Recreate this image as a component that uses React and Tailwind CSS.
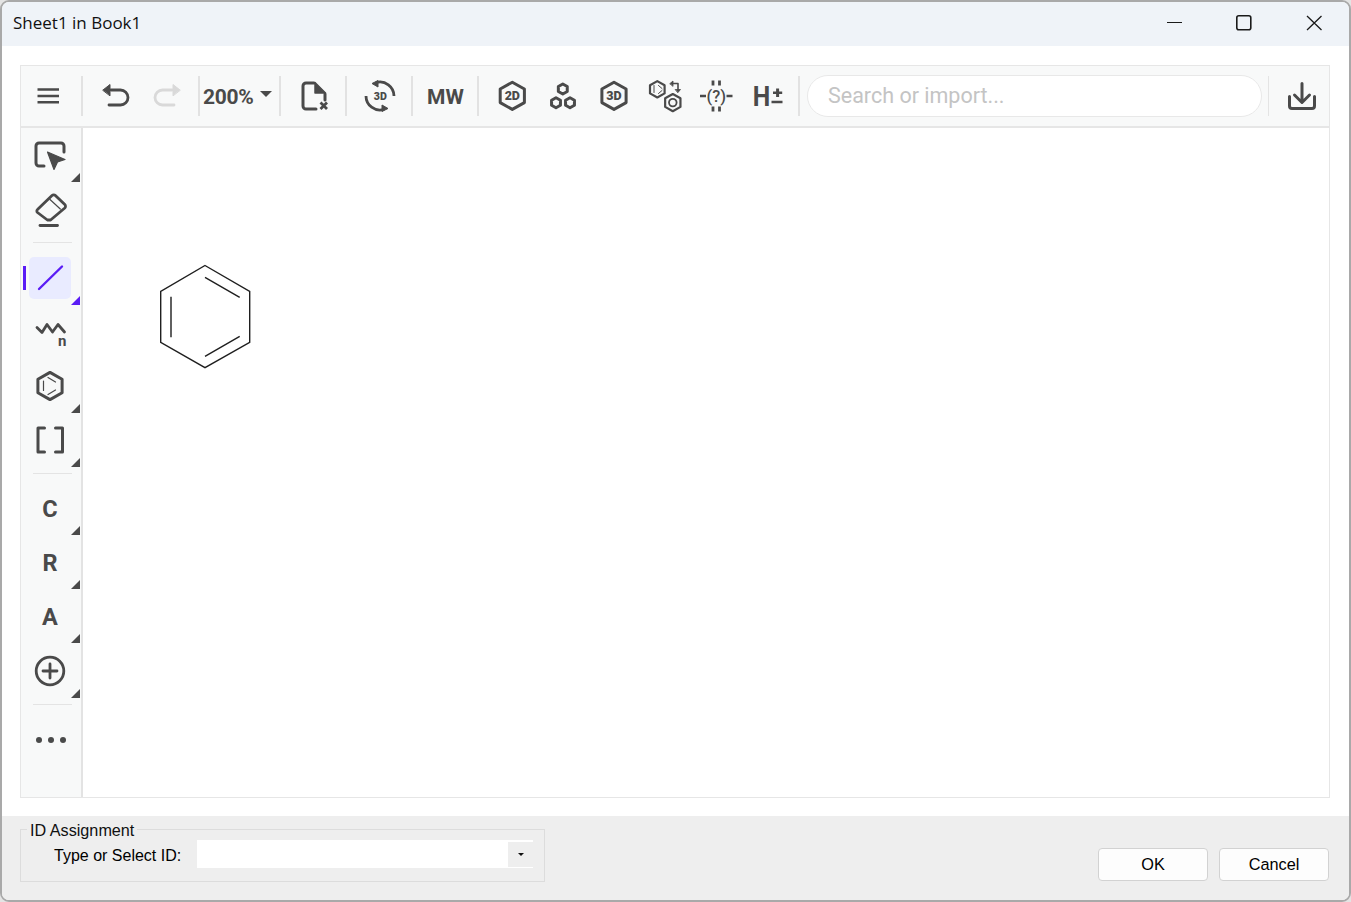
import React from "react";

const INK = "#4a4a4a";

function hex(cx, cy, r) {
  const a = r * 0.89;
  const b = r * 0.5;
  return `M${cx} ${cy - r}L${cx + a} ${cy - b}V${cy + b}L${cx} ${cy + r}L${cx - a} ${cy + b}V${cy - b}Z`;
}

// svg whose viewBox is expressed in page coordinates, sized to its slot
function Ic({ x, y, w, h, children }) {
  return (
    <svg
      width={w}
      height={h}
      viewBox={`${x} ${y} ${w} ${h}`}
      fill="none"
      stroke={INK}
      strokeLinecap="round"
      strokeLinejoin="round"
      className="block shrink-0"
    >
      {children}
    </svg>
  );
}

const T = (x, w, children) => (
  <Ic x={x} y={66} w={w} h={60}>
    {children}
  </Ic>
);

function Div() {
  return <div className="h-[40px] w-[2px] shrink-0 bg-[#e2e2e2]" />;
}

function Toolbar() {
  return (
    <div className="flex h-[60px] shrink-0 items-center border-b-0 bg-[#f8f9f9]">
      {T(21, 60, <g strokeWidth="2.6" strokeLinecap="butt"><path d="M37.5 89.5H59M37.5 96H59M37.5 102.3H59" /></g>)}
      <Div />
      {T(83, 58, <g strokeWidth="2.8"><path d="M111 90H120.5a7.5 7.5 0 0 1 0 15H109" /><path d="M103 90L110 84.5V95.5Z" fill={INK} strokeWidth="1" /></g>)}
      {T(141, 57, <g strokeWidth="2.8" stroke="#d9d9d9"><path d="M172 90H162.5a7.5 7.5 0 0 0 0 15H174" /><path d="M180 90L173 84.5V95.5Z" fill="#d9d9d9" strokeWidth="1" /></g>)}
      <Div />
      <div className="flex h-[60px] w-[79px] shrink-0 items-center pl-[3px]">
        <span className="mt-[3px] w-[57px] [font-family:Roboto,sans-serif] text-[21px] leading-none font-bold tracking-[-0.3px] text-[#4a4a4a]">200%</span>
        <svg width="12" height="6" viewBox="0 0 12 6" className="mb-[5px] block"><path d="M0 0H12L6 6Z" fill={INK} /></svg>
      </div>
      <Div />
      {T(281, 64, <g strokeWidth="3"><path d="M314 83H306a3 3 0 0 0-3 3V106a3 3 0 0 0 3 3H316M325 94V100" /><path d="M315 82.5L325.5 93H315Z" fill={INK} strokeWidth="1.5" /><path d="M320.5 102.5L327 109M327 102.5L320.5 109" strokeWidth="2.8" strokeLinecap="butt" /></g>)}
      <Div />
      {T(347, 64, (
        <g strokeWidth="2.8" strokeLinecap="butt">
          <path d="M376 82.6A14 14 0 0 1 394 96" />
          <path d="M372 83.5L378 80.5V87Z" fill={INK} strokeWidth="1" />
          <path d="M384 109.4A14 14 0 0 1 366 96" />
          <path d="M388 108.5L382 111.5V105Z" fill={INK} strokeWidth="1" />
          <text x="380.3" y="100" textAnchor="middle" fontFamily="Roboto" fontWeight="900" fontSize="11.5" textLength="13" lengthAdjust="spacingAndGlyphs" fill={INK} stroke="none">3D</text>
        </g>
      ))}
      <Div />
      <div className="flex h-[60px] w-[64px] shrink-0 items-center justify-center pt-[3px] pl-px [font-family:Roboto,sans-serif] text-[21px] leading-none font-bold text-[#4a4a4a]">MW</div>
      <Div />
      <div className="w-[8px] shrink-0" />
      {T(487, 51, (
        <g strokeWidth="3">
          <path d={hex(512.3, 95.8, 13.6)} />
          <text x="512.3" y="100.4" textAnchor="middle" fontFamily="Roboto" fontWeight="900" fontSize="12.5" fill={INK} stroke="none">2D</text>
        </g>
      ))}
      {T(538, 51, <g strokeWidth="3"><path d={hex(562.8, 89, 5)} /><path d={hex(556, 102.7, 5)} /><path d={hex(570, 102.7, 5)} /></g>)}
      {T(589, 51, (
        <g strokeWidth="3">
          <path d={hex(614, 95.8, 13.6)} />
          <text x="614" y="100.4" textAnchor="middle" fontFamily="Roboto" fontWeight="900" fontSize="12.5" fill={INK} stroke="none">3D</text>
        </g>
      ))}
      {T(640, 51, (
        <g strokeWidth="2.2">
          <path d={hex(657.3, 89.3, 8.2)} />
          <path d="M654 85.5V92.5M658.5 85.5L662 88.5M658.5 93.5L662 90.5" strokeWidth="1" />
          <path d={hex(672.8, 102.6, 8.6)} />
          <circle cx="672.8" cy="102.6" r="3.8" strokeWidth="1.8" />
          <path d="M672 83.5H678V90" strokeWidth="1.6" />
          <path d="M670 83.5L673 81V86Z" fill={INK} strokeWidth="0.8" />
          <path d="M675.5 89.5H680.5L678 92.5Z" fill={INK} strokeWidth="0.8" />
        </g>
      ))}
      {T(691, 51, (
        <g strokeWidth="2.4" strokeLinecap="butt">
          <path d="M700 96H706M726.5 96H732.5" />
          <path d="M713 80.5V85.5M719.5 80.5V85.5M713 106.5V111.5M719.5 106.5V111.5" strokeWidth="2.8" />
          <text x="716.2" y="101.6" textAnchor="middle" fontFamily="Roboto" fontWeight="500" fontSize="16.5" fill={INK} stroke="none">(?)</text>
        </g>
      ))}
      {T(742, 51, (
        <g strokeWidth="2.4" strokeLinecap="butt">
          <text x="761.5" y="105.8" textAnchor="middle" fontFamily="Roboto" fontWeight="700" fontSize="28" textLength="17.5" lengthAdjust="spacingAndGlyphs" fill={INK} stroke="none">H</text>
          <path d="M777.6 88.5V97" strokeWidth="3" />
          <path d="M773 92.8H782.2" strokeWidth="2.6" />
          <path d="M771.5 102H782.5" />
        </g>
      ))}
      <div className="w-[5px] shrink-0" />
      <Div />
      <div className="ml-[7px] flex h-[42px] w-[455px] shrink-0 items-center rounded-full border border-[#e8e8e8] bg-white pl-[20px] [font-family:Roboto,sans-serif] text-[21.5px] leading-none text-[#c4c4c4]">
        Search or import...
      </div>
      <div className="ml-[6px] h-[40px] w-px shrink-0 bg-[#e4e4e4]" />
      {T(1269, 60, <g strokeWidth="3"><path d="M1302 83.5V102M1294.5 95L1302 102.5L1309.5 95" /><path d="M1289.5 96.5V106a2.5 2.5 0 0 0 2.5 2.5H1312a2.5 2.5 0 0 0 2.5-2.5V96.5" /></g>)}
    </div>
  );
}

function Tri({ color = "#4a4a4a" }) {
  return (
    <svg width="9" height="9" viewBox="0 0 9 9" className="absolute right-px bottom-0 block">
      <path d="M9 0V9H0Z" fill={color} />
    </svg>
  );
}

function SideBtn({ y, tri, triColor, children }) {
  return (
    <div className="relative h-[54px] w-[60px] shrink-0">
      <Ic x={21} y={y} w={60} h={54}>
        {children}
      </Ic>
      {tri && <Tri color={triColor} />}
    </div>
  );
}

function SideText({ tri = true, children }) {
  return (
    <div className="relative flex h-[54px] w-[60px] shrink-0 items-center justify-center pt-[3px] pr-[2px] [font-family:Roboto,sans-serif] text-[23.5px] leading-none font-bold text-[#4a4a4a]">
      {children}
      {tri && <Tri />}
    </div>
  );
}

function SideDiv({ mt, mb }) {
  return <div className={`ml-[12px] h-px w-[39px] shrink-0 bg-[#e4e4e4] ${mt} ${mb}`} />;
}

function Sidebar() {
  return (
    <div className="flex w-[62px] shrink-0 flex-col border-r-2 border-[#e3e3e3] bg-[#f8f9f9]">
      <SideBtn y={128} tri>
        <g strokeWidth="3">
          <path d="M44 166H39a3 3 0 0 1-3-3V146a3 3 0 0 1 3-3H61a3 3 0 0 1 3 3V152" />
          <path d="M47.5 152L65 159.5L57.5 162L54 169.5Z" fill={INK} strokeWidth="1.2" />
        </g>
      </SideBtn>
      <div className="h-px shrink-0" />
      <SideBtn y={183}>
        <g strokeWidth="2.8">
          <path d="M37.5 209.5L52 195.5a2.4 2.4 0 0 1 3.4 0L64.8 204.6a2.4 2.4 0 0 1 0 3.4L50.6 220H47.4L37.5 212.5a2 2 0 0 1 0-3Z" />
          <path d="M50 199.5L60.3 209" strokeWidth="1.2" />
          <path d="M40 225.5H57.5" />
        </g>
      </SideBtn>
      <SideDiv mt="mt-[5px]" mb="mb-[8px]" />
      <div className="relative h-[54px] w-[60px] shrink-0">
        <div className="absolute top-[15px] left-[2px] h-[24px] w-[2.5px] bg-[#5a1cf5]" />
        <div className="absolute top-[6px] left-[8px] flex h-[42px] w-[42px] items-center justify-center rounded-[5px] bg-[#e9ebff]">
          <svg width="42" height="42" viewBox="0 0 42 42" fill="none" className="block">
            <path d="M10 32L33 9.5" stroke="#5a1cf5" strokeWidth="2.4" strokeLinecap="round" />
          </svg>
        </div>
        <Tri color="#5a1cf5" />
      </div>
      <SideBtn y={305}>
        <g strokeWidth="2.8">
          <path d="M37 327.5L42 332.5L47 324.5L52.5 332L58 324.5L64.5 332" />
          <text x="62.2" y="345.6" textAnchor="middle" fontFamily="Roboto" fontWeight="700" fontSize="15" fill={INK} stroke="none">n</text>
        </g>
      </SideBtn>
      <SideBtn y={359} tri>
        <g strokeWidth="3">
          <path d={hex(50, 386, 13.6)} />
          <path d="M43.5 381V390.5M48 377.5L55.5 382M48 394.5L55.5 390" strokeWidth="1.2" />
        </g>
      </SideBtn>
      <SideBtn y={413} tri>
        <g strokeWidth="3">
          <path d="M44.5 428H38V452H44.5M55.5 428H62.5V452H55.5" />
        </g>
      </SideBtn>
      <SideDiv mt="mt-[6px]" mb="mb-[7px]" />
      <SideText>C</SideText>
      <SideText>R</SideText>
      <SideText>A</SideText>
      <div className="h-px shrink-0" />
      <SideBtn y={644} tri>
        <g strokeWidth="2.8">
          <circle cx="50" cy="671" r="13.8" />
          <path d="M50 664V678M43 671H57" />
        </g>
      </SideBtn>
      <SideDiv mt="mt-[6px]" mb="mb-[8px]" />
      <SideBtn y={713}>
        <g fill={INK} stroke="none">
          <circle cx="39" cy="740" r="3" />
          <circle cx="51" cy="740" r="3" />
          <circle cx="63" cy="740" r="3" />
        </g>
      </SideBtn>
    </div>
  );
}

function Canvas() {
  return (
    <div className="min-w-0 flex-1 bg-white pt-[136px] pl-[75px]">
      <svg width="94" height="106" viewBox="158 264 94 106" fill="none" stroke="#1f1f1f" strokeWidth="1.4" className="block">
        <path d="M205 265.5L249.7 291.3V342.3L205 367.7L160.7 342.3V291.3Z" />
        <path d="M171 296.7V337.3M205 277.3L239.7 297.3M205 356.3L239.7 336.3" />
      </svg>
    </div>
  );
}

function TitleBar() {
  return (
    <div className="flex h-[44px] shrink-0 items-center bg-[#eff3f8] pl-[11px]">
      <span className="mb-[3px] [font-family:'Open_Sans',sans-serif] text-[17px] leading-none text-[#111111]">Sheet1 in Book1</span>
      <div className="ml-auto flex">
        <Ic x={1139} y={2} w={70} h={44}>
          <path d="M1167 22.5H1182" stroke="#1a1a1a" strokeWidth="1.2" strokeLinecap="butt" />
        </Ic>
        <Ic x={1209} y={2} w={70} h={44}>
          <rect x="1236.8" y="15.8" width="14" height="14" rx="2" stroke="#1a1a1a" strokeWidth="1.6" />
        </Ic>
        <Ic x={1279} y={2} w={70} h={44}>
          <path d="M1307 16L1321.5 30M1321.5 16L1307 30" stroke="#1a1a1a" strokeWidth="1.3" strokeLinecap="butt" />
        </Ic>
      </div>
    </div>
  );
}

function Footer() {
  return (
    <div className="flex h-[84px] shrink-0 justify-between bg-[#eeeeee] pt-[3px] pr-[20px] pl-[18px] [font-family:'Liberation_Sans',Arial,sans-serif] text-[16px] text-black">
      <fieldset className="h-[63px] w-[525px] border border-[#dcdcdc]">
        <legend className="ml-[6px] px-[3px] pt-[2px] text-[16.2px] leading-[18px] text-[#111111]">ID Assignment</legend>
        <div className="mt-px flex h-[28px] items-center pl-[33px]">
          <span className="mt-[3px] w-[143px] shrink-0 leading-none">Type or Select ID:</span>
          <div className="flex h-[28px] w-[336px] items-center justify-end bg-white">
            <div className="flex h-[25px] w-[25px] items-center justify-center bg-[#eeeeee]">
              <svg width="6" height="3" viewBox="0 0 6 3" className="block"><path d="M0 0H6L3 3Z" fill="#111111" /></svg>
            </div>
          </div>
        </div>
      </fieldset>
      <div className="flex items-end gap-[11px] pb-[19px]">
        <button className="h-[33px] w-[110px] rounded-[4px] border border-[#d2d2d2] bg-[#fdfdfd] text-[16.3px] text-black">OK</button>
        <button className="h-[33px] w-[110px] rounded-[4px] border border-[#d2d2d2] bg-[#fdfdfd] text-[16.3px] text-black">Cancel</button>
      </div>
    </div>
  );
}

export default function App() {
  return (
    <div className="h-[902px] w-[1351px] overflow-hidden bg-[#e4e4e4]">
      <div className="flex h-full w-full flex-col overflow-hidden rounded-[9px] border-2 border-[#a9a9a9] bg-white">
        <TitleBar />
        <div className="flex min-h-0 flex-1 flex-col bg-white pt-[19px] pr-[19px] pb-[18px] pl-[18px]">
          <div className="flex min-h-0 flex-1 flex-col border border-[#e6e6e6]">
            <Toolbar />
            <div className="h-[2px] shrink-0 bg-[#e6e6e6]" />
            <div className="flex min-h-0 flex-1">
              <Sidebar />
              <Canvas />
            </div>
          </div>
        </div>
        <Footer />
      </div>
    </div>
  );
}
